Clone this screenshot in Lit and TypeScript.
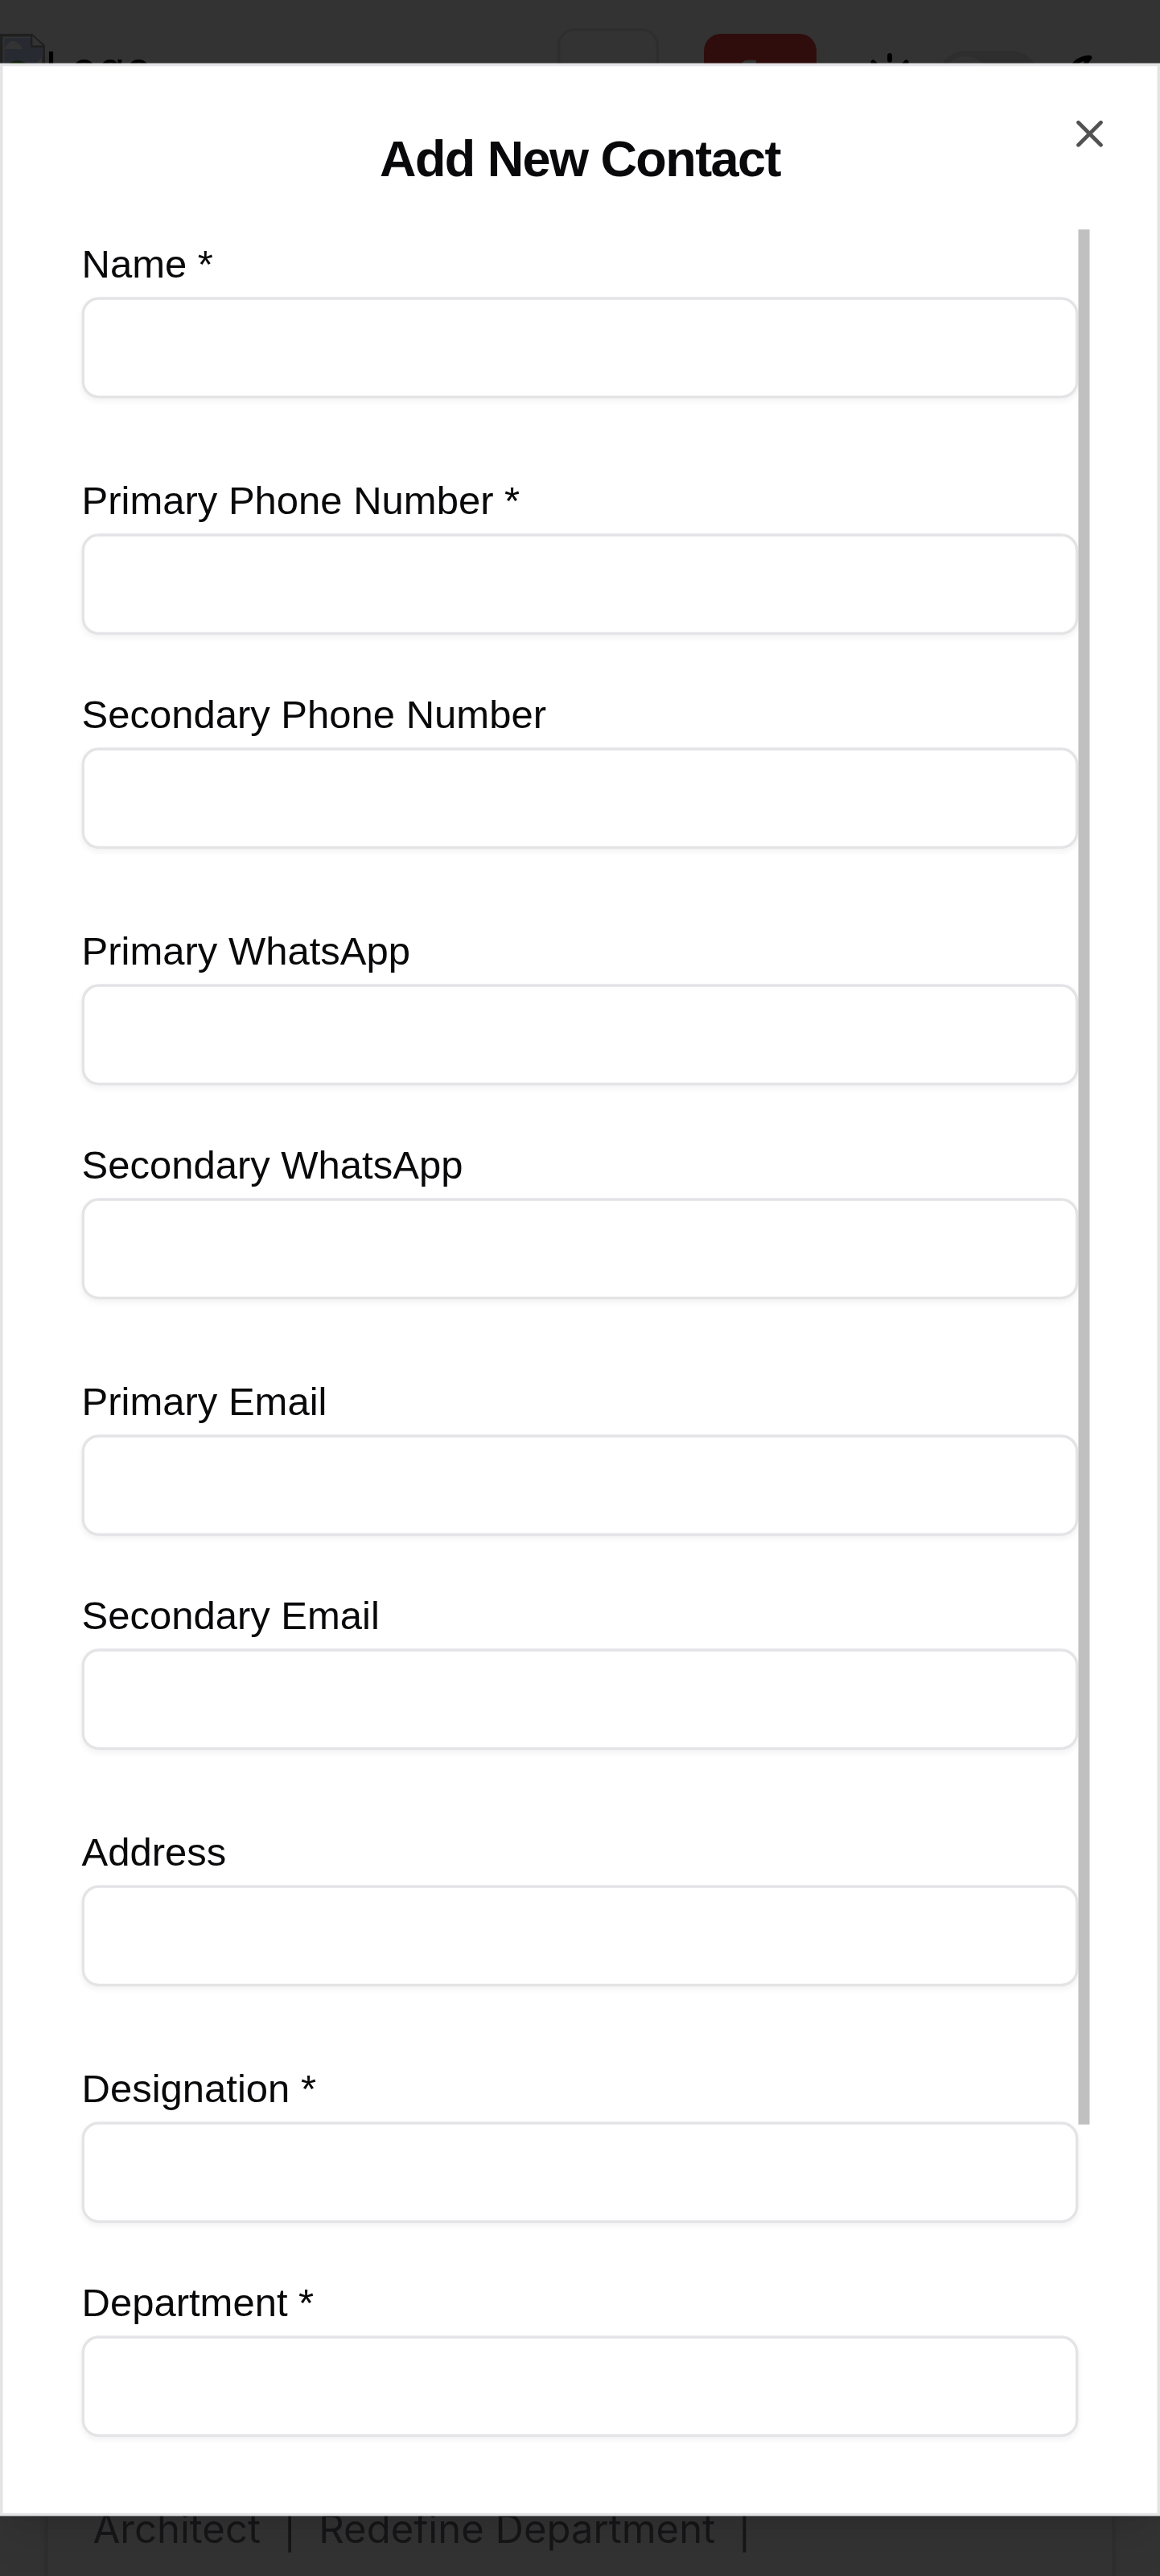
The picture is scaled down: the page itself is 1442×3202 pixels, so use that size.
import { LitElement, html, css } from "lit";
import { customElement, property } from "lit/decorators.js";

interface Field {
  id: string;
  label: string;
}

const GROUPS: Field[][] = [
  [{ id: "name", label: "Name *" }],
  [
    { id: "phone", label: "Primary Phone Number *" },
    { id: "phone2", label: "Secondary Phone Number" },
  ],
  [
    { id: "whatsapp", label: "Primary WhatsApp" },
    { id: "whatsapp2", label: "Secondary WhatsApp" },
  ],
  [
    { id: "email", label: "Primary Email" },
    { id: "email2", label: "Secondary Email" },
  ],
  [{ id: "address", label: "Address" }],
  [
    { id: "designation", label: "Designation *" },
    { id: "department", label: "Department *" },
  ],
];

@customElement("form-field")
class FormField extends LitElement {
  @property({ attribute: false }) field: Field = { id: "", label: "" };

  static styles = css`
    :host {
      display: block;
    }
    .label {
      display: block;
      font-size: 14px;
      line-height: 24px;
    }
    .input {
      display: block;
      box-sizing: border-box;
      width: 100%;
      height: 36px;
      margin: 0;
      padding: 4px 12px;
      border: 1px solid #e4e4e7;
      border-radius: 6px;
      background: transparent;
      box-shadow: 0 1px 2px 0 rgba(0, 0, 0, 0.05);
      font: inherit;
      font-size: 14px;
      outline: none;
    }
  `;

  render() {
    return html`
      <label class="label" for=${this.field.id}>${this.field.label}</label>
      <input class="input" id=${this.field.id} type="text" />
    `;
  }
}

@customElement("contact-dialog")
class ContactDialog extends LitElement {
  static styles = css`
    :host {
      display: block;
      box-sizing: border-box;
      height: 871px;
      padding: 24px;
      border: 1px solid #e4e4e7;
      background: #fff;
      color: #09090b;
      font-family: "Liberation Sans", Arial, sans-serif;
      box-shadow:
        0 10px 15px -3px rgba(0, 0, 0, 0.1),
        0 4px 6px -4px rgba(0, 0, 0, 0.1);
    }
    .title {
      margin: 0 0 16px;
      font-size: 18px;
      line-height: 18px;
      font-weight: 600;
      letter-spacing: -0.45px;
      text-align: center;
    }
    .close {
      position: absolute;
      top: 16px;
      right: 16px;
      width: 16px;
      height: 16px;
      padding: 0;
      border: 0;
      background: none;
      color: inherit;
      opacity: 0.7;
    }
    .close svg {
      display: block;
    }
    .scroll {
      display: flex;
      height: 787px;
      padding-left: 4px;
    }
    .form {
      flex: 1;
      display: flex;
      flex-direction: column;
      gap: 24px;
    }
    .group {
      display: flex;
      flex-direction: column;
      gap: 16px;
    }
    .thumb {
      width: 4px;
      height: 673px;
      background: #c0c0c0;
    }
  `;

  render() {
    return html`
      <h2 class="title">Add New Contact</h2>
      <div class="scroll">
        <form class="form">
          ${GROUPS.map(
            (group) => html`<div class="group">
              ${group.map((f) => html`<form-field .field=${f}></form-field>`)}
            </div>`
          )}
        </form>
        <div class="thumb"></div>
      </div>
      <button class="close" aria-label="Close">
        <svg width="16" height="16" viewBox="0 0 24 24" fill="none" stroke="currentColor" stroke-width="2" stroke-linecap="round" stroke-linejoin="round">
          <path d="M18 6 6 18" />
          <path d="m6 6 12 12" />
        </svg>
      </button>
    `;
  }
}

@customElement("app-root")
class AppRoot extends LitElement {
  static styles = css`
    :host {
      display: block;
      width: 1442px;
      height: 3202px;
      overflow: hidden;
    }
    /* The 412px wide phone layout, enlarged to the 3.5x window. */
    .screen {
      position: relative;
      width: 412px;
      height: 915px;
      overflow: hidden;
      transform: scale(3.5);
      transform-origin: 0 0;
      background: #fff;
      color: #000;
      font-family: Inter, sans-serif;
    }
    .page {
      display: flex;
      flex-direction: column;
      justify-content: space-between;
      height: 100%;
    }
    .bar {
      display: flex;
      align-items: flex-start;
      height: 56px;
    }
    .logo {
      display: flex;
      width: 198px;
      padding-top: 12px;
      font-size: 16px;
      line-height: 24px;
    }
    .square {
      box-sizing: border-box;
      width: 36px;
      height: 36px;
      margin: 10px 16px 0 0;
      border: 1px solid #e4e4e7;
      border-radius: 6px;
    }
    .logout {
      display: flex;
      justify-content: center;
      align-items: center;
      width: 40px;
      height: 32px;
      margin: 12px 15.6px 0 0;
      border-radius: 6px;
      background: #ef4444;
      color: #fff;
    }
    .theme {
      display: flex;
      align-items: center;
      padding-top: 18px;
      gap: 7.6px;
    }
    .switch {
      box-sizing: border-box;
      width: 36px;
      height: 20px;
      padding: 2px;
      border-radius: 10px;
      background: #e4e4e7;
    }
    .knob {
      width: 16px;
      height: 16px;
      border-radius: 8px;
      background: #fff;
    }
    .card {
      box-sizing: border-box;
      height: 60px;
      margin: 0 16px;
      padding: 33px 16px 0;
      border: solid #e4e4e7;
      border-width: 0 1px;
      box-shadow: 0 1px 3px rgba(0, 0, 0, 0.1);
      color: #71717a;
    }
    .meta {
      display: flex;
      gap: 8px;
      font-size: 14px;
      line-height: 20px;
      white-space: nowrap;
    }
    .overlay {
      position: absolute;
      inset: 0;
      background: rgba(0, 0, 0, 0.8);
    }
    .dialog {
      position: absolute;
      top: 50%;
      left: 0;
      right: 0;
      margin-top: 0.5px;
      transform: translateY(-50%);
    }
  `;

  render() {
    return html`
      <div class="screen">
        <div class="page">
          <header class="bar">
            <div class="logo">
              <svg width="16" height="16" viewBox="0 0 16 16">
                <path d="M.5.5h10.7l4.3 3.8v11.2H.5z" fill="#fff" stroke="#9a9a9a" />
                <path d="M1.5 1.5h9.4v3.2h4.4v3.4L8 15H1.5z" fill="#c3d0f2" />
                <path d="M1.6 5.4c.4-1.4 1-1.3 1.6-2.2.8-1 2.6-.8 3.2.4 1 .3 1.2 1 1.6 1.8z" fill="#fff" />
                <path d="M1.5 13c1-3 4-4 6-3.3 2 .6 3 2 3.4 3.3z" fill="#5aa53c" />
                <path d="M11.2.5v4h4.3" fill="#fff" stroke="#9a9a9a" stroke-width=".7" />
              </svg>
              <span>Logo</span>
            </div>
            <div class="square"></div>
            <div class="logout">
              <svg width="16" height="16" viewBox="0 0 24 24" fill="none" stroke="currentColor" stroke-width="2" stroke-linecap="round" stroke-linejoin="round">
                <path d="M9 21H5a2 2 0 0 1-2-2V5a2 2 0 0 1 2-2h4" />
                <path d="m16 17 5-5-5-5" />
                <path d="M21 12H9" />
              </svg>
            </div>
            <div class="theme">
              <svg width="20" height="20" viewBox="0 0 24 24" fill="none" stroke="currentColor" stroke-width="2" stroke-linecap="round" stroke-linejoin="round">
                <circle cx="12" cy="12" r="4" />
                <path d="M12 2v2M12 20v2M4.93 4.93l1.41 1.41M17.66 17.66l1.41 1.41M2 12h2M20 12h2M6.34 17.66l-1.41 1.41M19.07 4.93l-1.41 1.41" />
              </svg>
              <div class="switch"><div class="knob"></div></div>
              <svg width="20" height="20" viewBox="0 0 24 24" fill="none" stroke="currentColor" stroke-width="2" stroke-linecap="round" stroke-linejoin="round">
                <path d="M12 3a6 6 0 0 0 9 9 9 9 0 1 1-9-9Z" />
              </svg>
            </div>
          </header>
          <div class="card">
            <div class="meta">
              <span>Architect</span><span>|</span><span>Redefine Department</span><span>|</span>
            </div>
          </div>
        </div>
        <div class="overlay"></div>
        <contact-dialog class="dialog"></contact-dialog>
      </div>
    `;
  }
}
